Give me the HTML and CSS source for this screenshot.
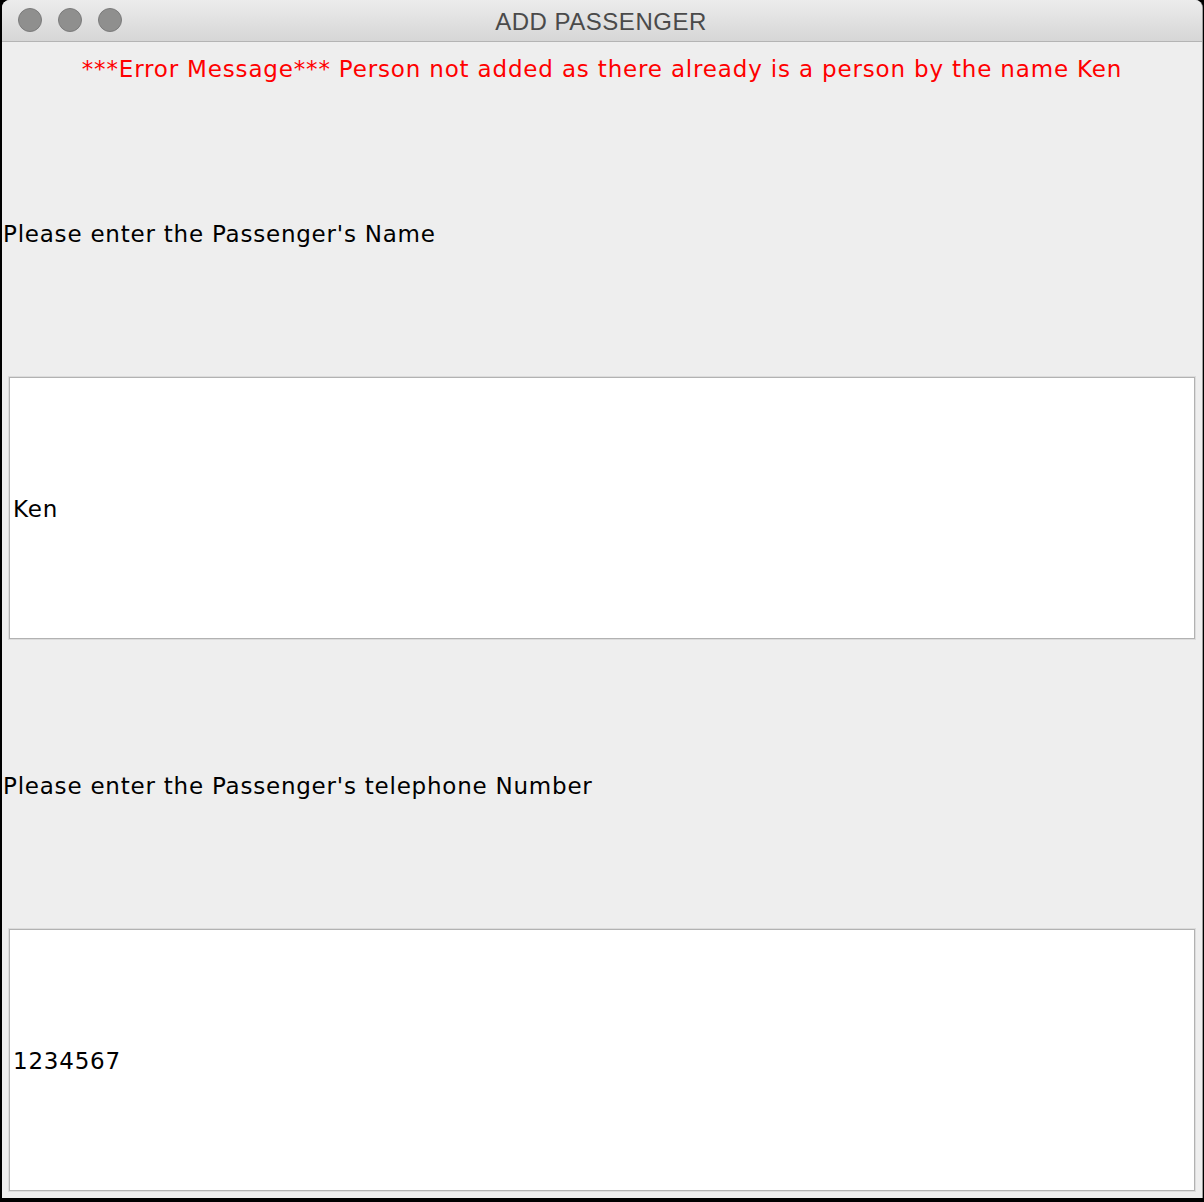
FILE: index.html
```html
<!DOCTYPE html>
<html>
<head>
<meta charset="utf-8">
<link rel="stylesheet" href="styles.css">
</head>
<body>
<div class="window">
  <div class="titlebar">
    <div class="lights">
      <span class="light"></span>
      <span class="light"></span>
      <span class="light"></span>
    </div>
    <div class="title">ADD PASSENGER</div>
  </div>
  <div class="content">
    <div class="error-row">***Error Message*** Person not added as there already is a person by the name Ken</div>
    <div class="row label-row">Please enter the Passenger's Name</div>
    <div class="row field-row"><div class="field">Ken</div></div>
    <div class="row label-row">Please enter the Passenger's telephone Number</div>
    <div class="row field-row"><div class="field">1234567</div></div>
  </div>
</div>
</body>
</html>
```

FILE: styles.css
```css
html, body {
  margin: 0;
  padding: 0;
}
body {
  width: 1204px;
  height: 1202px;
  background: #000;
  overflow: hidden;
}
.window {
  margin-left: 2px;
  width: 1200px;
  height: 1198px;
  border-right: 1px solid #9c9c9c;
  border-radius: 8px 8px 0 0;
  background: #eeeeee;
  display: flex;
  flex-direction: column;
  overflow: hidden;
}
.titlebar {
  height: 41px;
  flex: none;
  border-bottom: 1px solid #b4b4b4;
  background: linear-gradient(#ececec, #d6d6d6);
  position: relative;
  display: flex;
  align-items: center;
  justify-content: center;
}
.lights {
  position: absolute;
  left: 16px;
  top: 8px;
  display: flex;
  gap: 16px;
}
.light {
  width: 22px;
  height: 22px;
  border-radius: 50%;
  background: #8f8f8e;
  border: 1px solid #7b7b7b;
}
.title {
  font-family: "Liberation Sans", Arial, sans-serif;
  font-size: 24px;
  color: #4a4a4a;
  letter-spacing: 0.5px;
  padding-right: 2px;
  padding-top: 2px;
}
.content {
  flex: 1;
  display: flex;
  flex-direction: column;
  font-family: "DejaVu Sans", sans-serif;
  font-size: 23px;
  letter-spacing: 0.78px;
  color: #000;
}
.error-row {
  height: 52px;
  flex: none;
  box-sizing: border-box;
  padding-top: 2px;
  display: flex;
  align-items: center;
  justify-content: center;
  color: #ff0000;
  letter-spacing: 0.83px;
}
.row {
  height: 276px;
  flex: none;
  display: flex;
  box-sizing: border-box;
}
.label-row {
  align-items: center;
  padding-left: 1px;
  padding-top: 3px;
}
.field-row {
  padding: 7px;
}
.field {
  flex: 1;
  background: #fff;
  border: 1px solid #b2b2b2;
  box-shadow: 0 0 0 1px #dcdcdc;
  display: flex;
  align-items: center;
  padding-left: 3px;
  padding-top: 2px;
}
```
